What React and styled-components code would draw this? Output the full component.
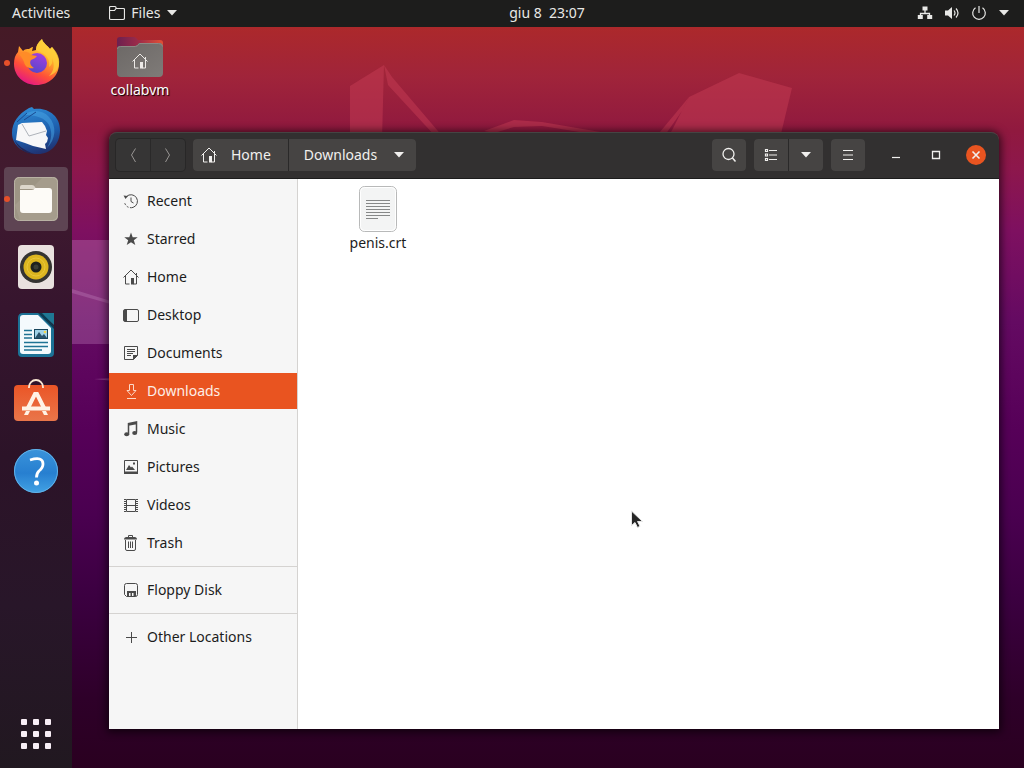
import React from 'react';
import styled, { createGlobalStyle } from 'styled-components';

const GlobalStyle = createGlobalStyle`
  * { box-sizing: border-box; }
  body { margin: 0; background: #2a0022; }
  body, button {
    font-family: "Noto Sans", "Open Sans", sans-serif;
    font-size: 14px;
    line-height: 20px;
  }
  button {
    margin: 0;
    padding: 0;
    border: 0;
    background: none;
    color: inherit;
    cursor: default;
  }
  svg { display: block; flex: none; }
  ul { margin: 0; padding: 0; list-style: none; }
`;

const Shell = styled.div`
  position: relative;
  display: grid;
  grid-template-columns: 72px minmax(0, 1fr);
  grid-template-rows: 27px minmax(0, 1fr);
  min-height: 100vh;
  overflow: hidden;
  background: linear-gradient(
    to bottom,
    #ad292a 3%, #a0243a 10%, #90193f 17%, #8d174c 22%, #7e1060 30%,
    #640a62 42%, #560058 56%, #4a0050 67%, #3b0040 78%, #2e0029 91%, #2a0020 100%
  );
`;

const WallpaperArt = styled.svg`
  position: absolute;
  inset: 0;
  width: 100%;
  height: 100%;
`;

const TopBar = styled.header`
  position: relative;
  grid-column: 1 / -1;
  display: grid;
  grid-template-columns: 1fr auto 1fr;
  align-items: center;
  padding: 0 14px 1px 12px;
  background: #1d1d1c;
  color: #e8e8e6;
`;

const BarGroup = styled.div`
  display: flex;
  align-items: center;
  gap: 39px;
`;

const BarButton = styled.button`
  display: flex;
  align-items: center;
  gap: 6px;
`;

const Clock = styled.button`
  padding-left: 72px;
  white-space: pre;
`;

const StatusButton = styled.button`
  display: flex;
  align-items: center;
  justify-self: end;
  gap: 11px;
`;

const Dock = styled.nav`
  position: relative;
  display: flex;
  flex-direction: column;
  align-items: center;
  gap: 4px;
  padding: 4px 4px 2px;
  background: linear-gradient(
    to bottom, #451a26, #411a2f 20%, #36152e 38%, #2c1328 58%, #281629 78%, #211820
  );
`;

const DockButton = styled.button`
  position: relative;
  display: grid;
  place-items: center;
  width: 64px;
  height: 64px;
  border-radius: 4px;
  background: ${(p) => (p.$active ? '#5e4453' : 'none')};

  &:last-child { margin-top: auto; }

  &::before {
    content: "";
    position: absolute;
    left: 0;
    top: 29px;
    width: 6px;
    height: 6px;
    border-radius: 3px;
    background: ${(p) => (p.$running ? '#e6502a' : 'none')};
  }
`;

const Desktop = styled.main`
  position: relative;
`;

const DesktopItem = styled.button`
  position: absolute;
  left: 28px;
  top: 9px;
  display: flex;
  flex-direction: column;
  align-items: center;
  gap: 2px;
  width: 80px;
  color: #fff;
  text-shadow: 1px 1px 1px #000;
`;

const FilesWindow = styled.section`
  position: absolute;
  left: 37px;
  top: 105px;
  right: 25px;
  bottom: 39px;
  display: flex;
  flex-direction: column;
  border-radius: 8px 8px 0 0;
  box-shadow: 0 1px 8px 2px rgba(0, 0, 0, 0.65);
`;

const HeaderBar = styled.header`
  display: flex;
  align-items: center;
  gap: 8px;
  height: 47px;
  padding: 0 13px 1px 7px;
  border-top: 1px solid #454443;
  border-bottom: 1px solid #1c1c1c;
  border-radius: 8px 8px 0 0;
  background: #323030;
  color: #f1f0ee;
`;

const ButtonGroup = styled.div`
  display: flex;
  gap: 1px;
  height: 32px;
  border-radius: 4px;
  overflow: hidden;
  background: #2a2929;
  box-shadow: 0 0 0 1px ${(p) => (p.$muted ? '#282727' : 'transparent')};
  color: ${(p) => (p.$muted ? '#999694' : 'inherit')};
`;

const ToolButton = styled.button`
  display: grid;
  place-items: center;
  width: 34px;
  background: ${(p) => (p.$muted ? '#363535' : '#464443')};
`;

const PathButton = styled.button`
  display: flex;
  align-items: center;
  gap: ${(p) => (p.$current ? '16px' : '14px')};
  padding: ${(p) => (p.$current ? '0 11px 0 15px' : '0 17px 0 8px')};
  background: #464443;
`;

const Spacer = styled.div`
  flex: 1;
`;

const WindowControls = styled.div`
  display: flex;
  gap: 20px;
  margin-left: 13px;
`;

const ControlButton = styled.button`
  display: grid;
  place-items: center;
  width: 20px;
  height: 20px;
  border-radius: 10px;
  background: ${(p) => (p.$close ? '#e95420' : 'none')};
`;

const WindowBody = styled.div`
  flex: 1;
  display: flex;
  background: #fff;
`;

const Sidebar = styled.nav`
  flex: none;
  width: 189px;
  padding-top: 4px;
  border-right: 1px solid #d5d3d1;
  background: #f6f6f6;
`;

const PlaceList = styled.ul`
  display: flex;
  flex-direction: column;
  gap: 2px;

  & + & {
    margin-top: 5px;
    padding-top: 5px;
    border-top: 1px solid #d5d3d1;
  }
`;

const PlaceButton = styled.button`
  display: flex;
  align-items: center;
  gap: 8px;
  width: 100%;
  height: 36px;
  padding-left: 14px;
  background: ${(p) => (p.$selected ? '#e95420' : 'none')};
  color: ${(p) => (p.$selected ? '#fdeee6' : '#1c1c1c')};

  svg { color: ${(p) => (p.$selected ? '#fbd9c8' : '#4a4a4a')}; }
`;

const FileGrid = styled.div`
  flex: 1;
  display: flex;
  align-items: flex-start;
  flex-wrap: wrap;
  padding: 6px 16px;
`;

const FileItem = styled.button`
  display: flex;
  flex-direction: column;
  align-items: center;
  width: 128px;
  color: #1c1c1c;
`;

const Pointer = styled.svg`
  position: absolute;
  left: 558px;
  top: 483px;
`;

const glyphs = {
  recent: (
    <>
      <path d="M3.500 3.500A6.500 6.500 0 1 1 1.500 9" strokeDasharray="26 1.500 2 1.500 2 1.500" />
      <path d="M8 4.500v4l2.500 1.500" />
      <path d="M.5 2.500 5 3 2.500 6z" fill="currentColor" stroke="none" />
    </>
  ),
  starred: <path d="m8 1.500 1.700 4.700h5L10.800 9.200l1.500 4.900L8 11.200l-4.300 2.900 1.500-4.900-3.900-3h5z" fill="currentColor" stroke="none" />,
  home: (
    <>
      <path d="M.5 8.500 8 1l7.500 7.500M2.500 7v8h4M13.500 4v11h-3" />
      <path d="M8 9h3v6.500H8z" fill="currentColor" stroke="none" />
    </>
  ),
  desktop: (
    <>
      <rect x=".5" y="2.500" width="15" height="12" rx="1.500" />
      <path d="M1 3h3v11H1z" fill="currentColor" stroke="none" />
    </>
  ),
  documents: (
    <>
      <path d="M1.500 1.500h13v9l-4 4h-9zM4 4.500h8M4 6.500h8M4 8.500h6M4 10.500h4" />
      <path d="M10 10h5l-5 5z" fill="currentColor" stroke="none" />
    </>
  ),
  downloads: <path d="M6.500 1.500h4v6H13l-4.500 5L4 7.500h2.500zM4 15.500h9" />,
  music: (
    <>
      <path d="M5.500 13V2.500l8-1.500v10.500M5.500 4l8-1.500" strokeWidth="1.500" />
      <ellipse cx="3.700" cy="13.200" rx="2.500" ry="2" fill="currentColor" stroke="none" />
      <ellipse cx="11.700" cy="12" rx="2.500" ry="2" fill="currentColor" stroke="none" />
    </>
  ),
  pictures: (
    <>
      <path d="M1.500 1.500h13v12h-13z" />
      <path d="M1 12.500h14V15H1zM3 11l3-5 2 2.500 1-1 3 3.500zM10 3.500h2v2h-2z" fill="currentColor" stroke="none" />
    </>
  ),
  videos: (
    <>
      <path d="M3.500 2.500h9v12h-9zM3.500 8.500h9" />
      <path d="M2 2v13M14 2v13" strokeWidth="2" strokeDasharray="1 1" />
    </>
  ),
  trash: (
    <>
      <path d="M2.500 5v9q0 1.500 1.500 1.500h7q1.500 0 1.500-1.500V5M5.500 6.500v6.500M7.500 6.500v6.500M9.500 6.500v6.500M5.500 2.500v-2h4v2" />
      <path d="M1 4.500q0-2.500 2.500-2.500h8Q14 2 14 4.500z" fill="currentColor" stroke="none" />
    </>
  ),
  floppy: (
    <>
      <path d="M3.500 1.500h9q2 0 2 2v9q0 2-2 2h-9l-2-2v-9q0-2 2-2z" />
      <path d="M4 9h9v5.500h-2.500V11H9v3.500H7.500V11H6v3.500H4z" fill="currentColor" stroke="none" />
    </>
  ),
  plus: <path d="M8.500 3v11M3 8.500h11" />,
  back: <path d="M10.500 1.500 6.500 8l4 7" />,
  forward: <path d="m5.500 1.500 4 6.500-4 7" />,
  search: (
    <>
      <circle cx="7.500" cy="7" r="5.500" strokeWidth="1.300" />
      <path d="m11.500 11 3 3.500" strokeWidth="1.500" />
    </>
  ),
  list: <path d="M2.500 2.500h2v2h-2zM2.500 7h2v2h-2zM2.500 11.500h2v2h-2zM6 3.500h8M6 8h8M6 12.500h8" strokeWidth="1.200" />,
  menu: <path d="M3 3.500h10M3 8h10M3 12.500h10" strokeWidth="1.200" />,
  minimize: <path d="M4 10.500h8" strokeWidth="1.200" />,
  maximize: <path d="M4.500 4.500h7v7h-7z" strokeWidth="1.300" />,
  close: <path d="m4.500 4.500 7 7m0-7-7 7" strokeWidth="1.600" />,
  folder: <path d="M.5 13V2.500Q.5 1.500 1.500 1.500h4.500Q7 1.500 7 2.500v1h7.500Q15.500 3.500 15.500 4.500V13Q15.500 14.500 14 14.500H2Q.5 14.500.5 13zM1 5.500h4.500L7 3.500" strokeWidth="1.200" />,
  network: (
    <>
      <path d="M8 5v4M3.500 11V8.500h9V11" strokeWidth="1.300" />
      <path d="M5.500 1.500h5v4h-5zM.8 10h5v4h-5zM10.200 10h5v4h-5z" fill="currentColor" stroke="none" />
    </>
  ),
  volume: (
    <>
      <path d="M1 5.500h3L8 2v12l-4-3.500H1z" fill="currentColor" stroke="none" />
      <path d="M10 5.500q2 2.500 0 5M12 3.500q4 4.500 0 9" strokeWidth="1.200" />
    </>
  ),
  power: <path d="M8 1v7M4.500 2.800a6.300 6.300 0 1 0 7 0" strokeWidth="1.200" />,
};

const Icon = ({ name }) => (
  <svg width="16" height="16" viewBox="0 0 16 16" fill="none" stroke="currentColor" aria-hidden="true">
    {glyphs[name]}
  </svg>
);

const Caret = () => (
  <svg width="12" height="6" viewBox="0 0 12 6" aria-hidden="true">
    <path d="M1 0h10L6 5.500z" fill="currentColor" />
  </svg>
);

const AppArt = ({ children }) => (
  <svg width="48" height="48" viewBox="0 0 48 48" aria-hidden="true">{children}</svg>
);

const FirefoxArt = () => (
  <AppArt>
    <defs>
      <linearGradient id="fxBody" x1=".8" y1="0" x2=".3" y2="1">
        <stop offset="0" stopColor="#fff04a" />
        <stop offset=".4" stopColor="#ffa52a" />
        <stop offset=".7" stopColor="#ff5038" />
        <stop offset="1" stopColor="#e31587" />
      </linearGradient>
      <linearGradient id="fxGlobe" x1=".7" y1="0" x2=".3" y2="1">
        <stop offset="0" stopColor="#a23ee0" />
        <stop offset="1" stopColor="#5547c8" />
      </linearGradient>
    </defs>
    <path d="M30 0c1 4 5 6 8 10l2-2c4 5 7 11 7 17 0 12-10 21-22.500 21S2 37 2 25c0-5 1-9 4-12l1-6 4 5c2-2 4-2 6-2 2-1 2-2 4-2l-1 4 4-1c0-5 3-8 6-11z" fill="url(#fxBody)" />
    <path d="M30 0c-4 3-6 7-6 11l6 3c6 3 8 8 7 14 3-2 4-5 3-9 3 7 2 13-3 18 8-3 11-9 10-17-1-5-4-9-7-12l-2 2c-3-4-7-6-8-10z" fill="#ffcf3a" opacity=".75" />
    <circle cx="25" cy="24" r="10" fill="url(#fxGlobe)" />
    <path d="M7 15c4-3 9-3 12 1l6 1c-1 2-4 3-6 4-2 3 0 6 3 8-5 1-9-1-10-6-1-3-3-5-5-8z" fill="#ff8c27" />
  </AppArt>
);

const ThunderbirdArt = () => (
  <AppArt>
    <defs>
      <linearGradient id="tbBody" x1=".3" y1="0" x2=".6" y2="1">
        <stop offset="0" stopColor="#2f8bd5" />
        <stop offset=".6" stopColor="#1c5cab" />
        <stop offset="1" stopColor="#20306e" />
      </linearGradient>
    </defs>
    <path d="M17 1 20 0l2 2c14-2 26 7 26 21 0 14-9 24-22 24C12 47 0 39 0 26 0 16 6 7 17 1z" fill="url(#tbBody)" />
    <path d="M12 8c8-6 19-5 25 2 8 9 7 22-2 31 8-13 4-26-6-30-7-3-12-3-17-3z" fill="#49a5e6" opacity=".5" />
    <path d="m10 16 20-1 3 4 2 5-1 4 2 3-1 4-2 2 1 5-13-3-8-3-9-3 2-15z" fill="#f7f7f8" />
    <path d="m10 17 7 12 17-5" fill="none" stroke="#aeb3ba" />
    <path d="M2 32c4 7 10 11 20 15-6 0-16-4-20-15z" fill="#232452" />
    <path d="M5 15 15 6M12 13 24 5" stroke="#1b4a91" />
  </AppArt>
);

const FilesArt = () => (
  <AppArt>
    <rect x="2" y="2" width="44" height="44" rx="5" fill="#9d9584" />
    <path d="m3 30 28-28h10q5 0 5 5v34q0 5-5 5H8z" fill="#aaa291" opacity=".6" />
    <rect x="2.500" y="2.500" width="43" height="43" rx="5" fill="none" stroke="#b9b2a4" />
    <path d="M8 14v-2q0-2 2-2h10q2 0 3 2l1 2z" fill="#dcd6ca" />
    <path d="M8 15h12q2 0 3-2h14q3 0 3 3v19q0 3-3 3H11q-3 0-3-3z" fill="#fdfbf7" />
  </AppArt>
);

const RhythmboxArt = () => (
  <AppArt>
    <rect x="6" y="2" width="36" height="44" rx="4" fill="#e9e1df" />
    <circle cx="24" cy="24" r="16" fill="#353432" />
    <circle cx="24" cy="24" r="12.500" fill="#dcb51f" />
    <circle cx="24" cy="24" r="9" fill="none" stroke="#e9c73a" />
    <circle cx="24" cy="24" r="5.500" fill="#1e211e" />
    <circle cx="24" cy="24" r="2.500" fill="#3a3e36" />
  </AppArt>
);

const WriterArt = () => (
  <AppArt>
    <path d="M11 2h17l14 14v26q0 4-4 4H10q-4 0-4-4V7q0-5 5-5z" fill="#1c7296" />
    <path d="M29 2h13v12z" fill="#1f7894" />
    <path d="M11 4h15l13 13v23q0 3-3 3H11q-3 0-3-3V7q0-3 3-3z" fill="#f4fafd" />
    <path d="m26 2 16 16v-3L30 2z" fill="#0c3c53" />
    <path d="M12 19.500h8M12 23.500h8M12 27h8M12 31.500h24M12 35.500h24M12 39h18" stroke="#1f7394" strokeWidth="1.700" />
    <rect x="22" y="18" width="14" height="10" fill="#17455c" />
    <path d="M23 19h12v8H23z" fill="#a1d2e8" />
    <path d="m23 27 4-6 3 4 2-2 3 4z" fill="#29526a" />
    <circle cx="33" cy="21" r="1.300" fill="#f5d64b" />
  </AppArt>
);

const SoftwareArt = () => (
  <AppArt>
    <defs>
      <linearGradient id="bagBody" x1="0" y1="0" x2="0" y2="1">
        <stop offset="0" stopColor="#eb5526" />
        <stop offset="1" stopColor="#e9764a" />
      </linearGradient>
    </defs>
    <rect x="2" y="6" width="44" height="36" rx="4" fill="url(#bagBody)" />
    <path d="M17 9V8a7 7 0 0 1 14 0v1" fill="none" stroke="#fbe9d4" strokeWidth="1.800" />
    <path d="m15.500 30 7.500-15h2l7.500 15" fill="none" stroke="#fff3e6" strokeWidth="4" />
    <path d="M10 27.500h28v4H10zM14 32h4l-2 4h-4zM30 32h4l2 4h-4z" fill="#fff3e6" />
  </AppArt>
);

const HelpArt = () => (
  <AppArt>
    <defs>
      <linearGradient id="helpBody" x1="0" y1="0" x2="0" y2="1">
        <stop offset="0" stopColor="#3a93da" />
        <stop offset=".55" stopColor="#277fd0" />
        <stop offset="1" stopColor="#42a2e4" />
      </linearGradient>
    </defs>
    <circle cx="24" cy="24" r="22" fill="url(#helpBody)" />
    <circle cx="24" cy="24" r="21.500" fill="none" stroke="#62b2e8" />
    <path d="M18 13q13-4 13 4 0 4-4 7-2.500 2.500-2.500 6.500" fill="none" stroke="#fff" strokeWidth="2.800" />
    <circle cx="24.500" cy="36" r="2.500" fill="#fff" />
  </AppArt>
);

const AppGridArt = () => (
  <AppArt>
    {[9, 21, 33].map((y) => [9, 21, 33].map((x) => (
      <rect key={`${x}-${y}`} x={x} y={y} width="6" height="6" rx="1" fill="#f8eef6" />
    )))}
  </AppArt>
);

const HomeFolderArt = () => (
  <svg width="48" height="42" viewBox="0 0 48 42" aria-hidden="true">
    <defs>
      <linearGradient id="folderTab" x1="0" y1="0" x2="1" y2="0">
        <stop offset="0" stopColor="#6c2050" />
        <stop offset=".5" stopColor="#a02c48" />
        <stop offset="1" stopColor="#e25035" />
      </linearGradient>
      <linearGradient id="folderFront" x1="0" y1="0" x2="1" y2="1">
        <stop offset="0" stopColor="#6c6866" />
        <stop offset="1" stopColor="#7f7b78" />
      </linearGradient>
    </defs>
    <path d="M1 12V4q0-3 3-3h14q2 0 4 3h22q3 0 3 3v10H1z" fill="url(#folderTab)" />
    <path d="M1 13q0-3 3-3h15q2 0 4-3h20q4 0 4 4v26q0 4-4 4H5q-4 0-4-4z" fill="url(#folderFront)" />
    <path d="M1.500 13q0-2.500 3-2.500h15q2 0 4-3h19q4 0 4 3" fill="none" stroke="#8d8884" />
    <g transform="translate(16 17)" fill="none" stroke="#ece9e6" color="#ece9e6">{glyphs.home}</g>
  </svg>
);

const TextFileArt = () => (
  <svg width="40" height="48" viewBox="0 0 40 48" aria-hidden="true">
    <rect x="1.500" y="1.500" width="37" height="45" rx="5" fill="#f3f4f4" stroke="#b8b9b9" />
    <rect x="2.500" y="2.500" width="35" height="43" rx="4" fill="none" stroke="#fff" />
    <path d="M8 15.500h24M8 18.500h24M8 21.500h24M8 24.500h24M8 27.500h24M8 30.500h24M8 33.500h12" stroke="#868888" />
  </svg>
);

const apps = [
  { label: 'Firefox', Art: FirefoxArt, running: true },
  { label: 'Thunderbird', Art: ThunderbirdArt },
  { label: 'Files', Art: FilesArt, running: true, active: true },
  { label: 'Rhythmbox', Art: RhythmboxArt },
  { label: 'LibreOffice Writer', Art: WriterArt },
  { label: 'Ubuntu Software', Art: SoftwareArt },
  { label: 'Help', Art: HelpArt },
  { label: 'Show Applications', Art: AppGridArt },
];

const placeGroups = [
  [
    ['Recent', 'recent'],
    ['Starred', 'starred'],
    ['Home', 'home'],
    ['Desktop', 'desktop'],
    ['Documents', 'documents'],
    ['Downloads', 'downloads'],
    ['Music', 'music'],
    ['Pictures', 'pictures'],
    ['Videos', 'videos'],
    ['Trash', 'trash'],
  ],
  [['Floppy Disk', 'floppy']],
  [['Other Locations', 'plus']],
];

const Wallpaper = () => (
  <WallpaperArt viewBox="0 0 1024 768" preserveAspectRatio="none" aria-hidden="true">
    <g fill="#c63b53" fillOpacity=".5">
      <path d="M350 86 384 65l-2 75h-32z" />
      <path d="m384 65 8 12 51 60h-7l-48-52z" />
      <path d="m484 131 30-11 28 2 70 12h-20l-50-8-28 1-20 6z" />
      <path d="m689 97 50-24 53 15-12 50H668z" />
      <path d="m689 97-7 14-19 27h-8z" />
    </g>
    <g fill="#d9a0d4">
      <path d="M72 240h47v104H72z" fillOpacity=".27" />
      <path d="m72 289 42 13v3l-42-12z" fillOpacity=".25" />
      <path d="m94 379 20-1v3z" fillOpacity=".3" />
    </g>
  </WallpaperArt>
);

export default function App() {
  return (
    <Shell>
      <GlobalStyle />
      <Wallpaper />
      <TopBar>
        <BarGroup>
          <BarButton>Activities</BarButton>
          <BarButton><Icon name="folder" />Files<Caret /></BarButton>
        </BarGroup>
        <Clock>{'giu 8  23:07'}</Clock>
        <StatusButton aria-label="System menu">
          <Icon name="network" />
          <Icon name="volume" />
          <Icon name="power" />
          <Caret />
        </StatusButton>
      </TopBar>
      <Dock aria-label="Dock">
        {apps.map(({ label, Art, running, active }) => (
          <DockButton key={label} aria-label={label} $running={running} $active={active}>
            <Art />
          </DockButton>
        ))}
      </Dock>
      <Desktop>
        <DesktopItem><HomeFolderArt />collabvm</DesktopItem>
        <FilesWindow aria-label="Downloads">
          <HeaderBar>
            <ButtonGroup $muted>
              <ToolButton $muted aria-label="Back"><Icon name="back" /></ToolButton>
              <ToolButton $muted aria-label="Forward"><Icon name="forward" /></ToolButton>
            </ButtonGroup>
            <ButtonGroup>
              <PathButton><Icon name="home" />Home</PathButton>
              <PathButton $current>Downloads<Caret /></PathButton>
            </ButtonGroup>
            <Spacer />
            <ButtonGroup>
              <ToolButton aria-label="Search"><Icon name="search" /></ToolButton>
            </ButtonGroup>
            <ButtonGroup>
              <ToolButton aria-label="List view"><Icon name="list" /></ToolButton>
              <ToolButton aria-label="View options"><Caret /></ToolButton>
            </ButtonGroup>
            <ButtonGroup>
              <ToolButton aria-label="Menu"><Icon name="menu" /></ToolButton>
            </ButtonGroup>
            <WindowControls>
              <ControlButton aria-label="Minimize"><Icon name="minimize" /></ControlButton>
              <ControlButton aria-label="Maximize"><Icon name="maximize" /></ControlButton>
              <ControlButton $close aria-label="Close"><Icon name="close" /></ControlButton>
            </WindowControls>
          </HeaderBar>
          <WindowBody>
            <Sidebar aria-label="Places">
              {placeGroups.map((group) => (
                <PlaceList key={group[0][0]}>
                  {group.map(([label, icon]) => (
                    <li key={label}>
                      <PlaceButton $selected={label === 'Downloads'}>
                        <Icon name={icon} />{label}
                      </PlaceButton>
                    </li>
                  ))}
                </PlaceList>
              ))}
            </Sidebar>
            <FileGrid>
              <FileItem><TextFileArt />penis.crt</FileItem>
            </FileGrid>
          </WindowBody>
        </FilesWindow>
        <Pointer width="14" height="20" viewBox="0 0 14 20" aria-hidden="true">
          <path d="M1.500 1v14.500l3.500-3 2.500 5 2.500-1.200-2.500-4.800h5z" fill="#262626" stroke="#e6e6e6" />
        </Pointer>
      </Desktop>
    </Shell>
  );
}
